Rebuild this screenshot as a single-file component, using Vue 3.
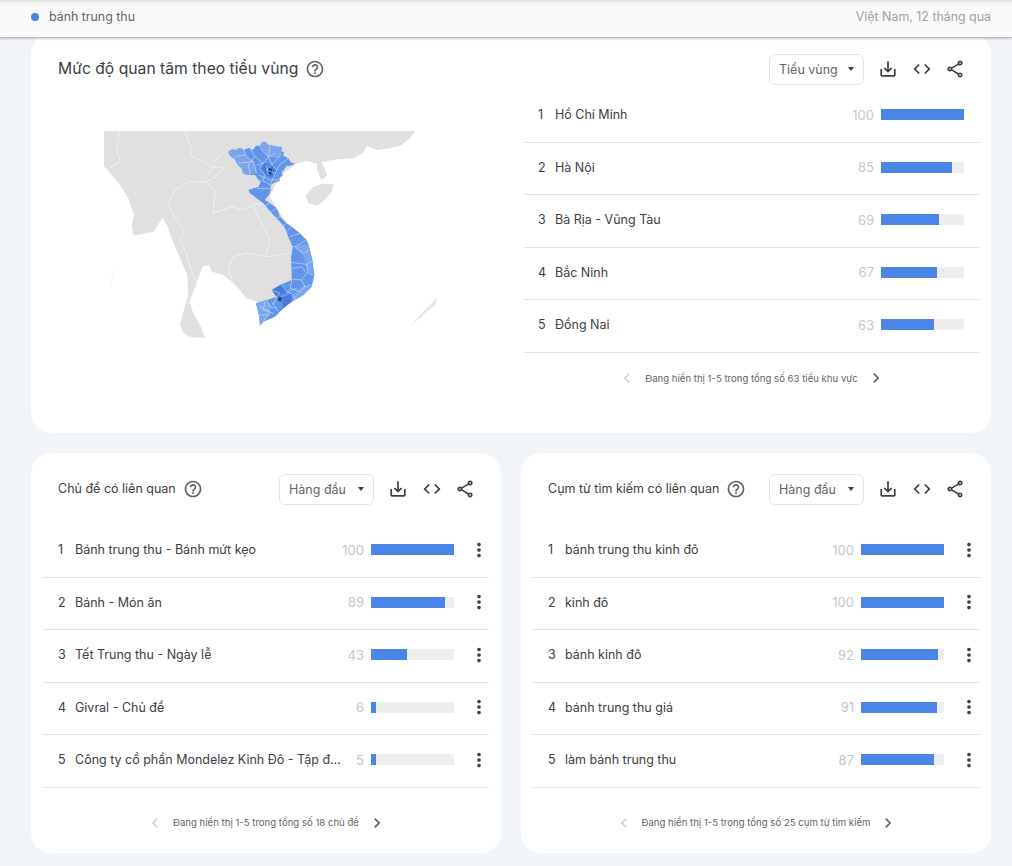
<script setup>
const icons = {
  save: 'M19 12v7H5v-7H3v7c0 1.1.9 2 2 2h14c1.1 0 2-.9 2-2v-7h-2zm-6 .67l2.59-2.58L17 11.5l-5 5-5-5 1.41-1.41L11 12.67V3h2z',
  code: 'M9.4 16.6L4.8 12l4.6-4.6L8 6l-6 6 6 6 1.4-1.4zm5.2 0l4.6-4.6-4.6-4.6L16 6l6 6-6 6-1.4-1.4z',
  share: 'M18 16.08c-.76 0-1.44.3-1.96.77L8.91 12.7c.05-.23.09-.46.09-.7s-.04-.47-.09-.7l7.05-4.11c.54.5 1.25.81 2.04.81 1.66 0 3-1.34 3-3s-1.34-3-3-3-3 1.34-3 3c0 .24.04.47.09.7L8.04 9.81C7.5 9.31 6.79 9 6 9c-1.66 0-3 1.34-3 3s1.34 3 3 3c.79 0 1.5-.31 2.04-.81l7.12 4.16c-.05.21-.08.43-.08.65 0 1.61 1.31 2.92 2.92 2.92 1.61 0 2.92-1.31 2.92-2.92s-1.31-2.92-2.92-2.92zM18 4c.55 0 1 .45 1 1s-.45 1-1 1-1-.45-1-1 .45-1 1-1zM6 13c-.55 0-1-.45-1-1s.45-1 1-1 1 .45 1 1-.45 1-1 1zm12 7.02c-.55 0-1-.45-1-1s.45-1 1-1 1 .45 1 1-.45 1-1 1z',
  help: 'M11 18h2v-2h-2v2zm1-16C6.48 2 2 6.48 2 12s4.48 10 10 10 10-4.48 10-10S17.52 2 12 2zm0 18c-4.41 0-8-3.59-8-8s3.59-8 8-8 8 3.59 8 8-3.59 8-8 8zm0-14c-2.21 0-4 1.79-4 4h2c0-1.1.9-2 2-2s2 .9 2 2c0 2-3 1.75-3 5h2c0-2.25 3-2.5 3-5 0-2.21-1.79-4-4-4z',
  prev: 'M15.41 7.41L14 6l-6 6 6 6 1.41-1.41L10.83 12z',
  next: 'M8.59 16.59L10 18l6-6-6-6-1.41 1.41L13.17 12z',
  more: 'M12 8c1.1 0 2-.9 2-2s-.9-2-2-2-2 .9-2 2 .9 2 2 2zm0 2c-1.1 0-2 .9-2 2s.9 2 2 2 2-.9 2-2-.9-2-2-2zm0 6c-1.1 0-2 .9-2 2s.9 2 2 2 2-.9 2-2-.9-2-2-2z'
}
const actions = ['save', 'code', 'share']
const barWidth = (v) => Math.min(83, Math.round(0.83 * v + 0.5)) + 'px'

const regions = [
  ['Hồ Chí Minh', 100], ['Hà Nội', 85], ['Bà Rịa - Vũng Tàu', 69], ['Bắc Ninh', 67], ['Đồng Nai', 63]
]
const cards = [
  {
    title: 'Chủ đề có liên quan',
    pager: 'Đang hiển thị 1-5 trong tổng số 18 chủ đề',
    rows: [
      ['Bánh trung thu - Bánh mứt kẹo', 100], ['Bánh - Món ăn', 89], ['Tết Trung thu - Ngày lễ', 43],
      ['Givral - Chủ đề', 6], ['Công ty cổ phần Mondelez Kinh Đô - Tập đoàn', 5]
    ]
  },
  {
    title: 'Cụm từ tìm kiếm có liên quan',
    pager: 'Đang hiển thị 1-5 trong tổng số 25 cụm từ tìm kiếm',
    rows: [
      ['bánh trung thu kinh đô', 100], ['kinh đô', 100], ['bánh kinh đô', 92],
      ['bánh trung thu giá', 91], ['làm bánh trung thu', 87]
    ]
  }
]

const land = 'M12 18H945L930 40 905 60 870 70 830 75 800 62 790 85 760 100 700 104 665 112 682 150 664 166 652 135 650 116 620 108 590 115 545 150 520 190 510 215 530 250 560 295 600 325 630 375 643 450 635 485 575 530 525 560 470 530 440 520 415 490 395 470 370 450 335 440 328 422 308 424 300 445 290 475 280 500 268 530 280 565 300 600 316 638 270 636 248 620 240 600 250 560 264 510 262 450 240 400 215 340 205 310 188 278 160 320 130 326 100 332 95 300 102 270 85 220 60 180 30 145 12 122Z'
const hainan = 'M616 212 640 186 670 176 702 178 695 200 675 225 650 242 625 235Z'
const vietnam = 'M385 80 397 72 405 76 420 68 432 75 447 68 458 75 468 62 480 62 486 52 497 50 505 60 520 62 530 68 546 67 544 80 552 80 550 92 565 100 572 112 586 117 570 122 558 124 552 136 545 140 548 152 538 158 540 168 525 172 512 180 512 195 508 208 495 225 510 235 530 250 540 275 560 295 575 305 600 325 620 345 630 375 637 405 643 450 635 485 610 510 575 530 545 555 525 575 490 590 480 602 478 575 468 535 500 525 530 515 515 495 545 478 575 465 575 440 573 400 578 365 565 335 555 310 540 290 515 265 490 235 450 205 445 195 475 185 482 172 472 160 465 150 448 150 430 146 425 130 412 118 405 102 390 92Z'
const light = [
  'M385 80 397 72 405 76 420 68 432 75 440 95 460 110 470 145 448 150 430 146 425 130 412 118 405 102 390 92Z',
  'M497 50 505 60 520 62 546 67 544 80 535 100 505 95 485 75 486 52Z',
  'M580 365 625 355 637 405 640 450 620 435 610 390Z',
  'M610 480 635 485 610 510 575 530 580 510Z',
  'M468 535 500 525 515 545 500 580 480 602 478 575Z'
]
const dark = [
  'M490 115 515 118 530 135 520 158 495 150 480 130Z',
  'M515 495 545 478 565 500 530 515Z',
  'M545 520 575 505 575 530 550 548Z'
]
const darkest = ['M505 128 516 132 514 150 505 146Z', 'M536 514 546 518 542 530 534 526Z']
const borders = [
  'M430 72 440 95 460 110 470 145', 'M450 70 465 95 490 115 480 130 495 150 490 165',
  'M480 60 485 75 505 95 490 115', 'M510 62 505 95 515 118 530 135 520 158 510 180',
  'M545 85 535 100 515 118', 'M565 100 540 118 530 135', 'M415 115 440 112 460 110', 'M405 95 435 90',
  'M465 95 445 120 450 148', 'M505 95 525 85', 'M490 115 470 120', 'M500 120 505 150', 'M515 118 500 135 525 145',
  'M475 150 510 165 540 165', 'M480 165 500 172 510 180', 'M470 190 510 190', 'M495 225 510 220',
  'M510 235 490 245', 'M530 250 510 262', 'M540 275 525 280', 'M560 295 545 305', 'M575 305 560 320',
  'M600 325 570 335', 'M620 345 585 365 578 365', 'M585 365 610 385 630 375', 'M573 412 620 418 635 410',
  'M620 418 625 445 640 450', 'M578 430 605 425 620 445 605 465 575 462', 'M605 465 615 485 635 480',
  'M575 465 570 490 600 500 615 485', 'M545 478 560 500 590 490', 'M515 495 540 505 530 515', 'M560 500 575 505 590 525',
  'M500 525 510 545 530 550', 'M480 545 510 560 490 590', 'M515 530 535 560', 'M478 570 510 570', 'M495 530 490 555 520 565', 'M530 515 520 540'
]
const borderLines = [
  'M60 18 50 70 60 110 30 128', 'M255 18 270 60 275 95 320 115 340 128 375 125 350 155 320 170 345 200 340 265 395 245 430 255 460 240 480 290 510 340 500 385',
  'M320 170 270 170 225 195 205 235 225 280 255 320 240 345 260 390 275 440 290 470', 'M345 120 320 150', 'M385 430 400 395 440 385 510 395 570 385', 'M385 430 395 470',
  'M460 240 490 235', 'M360 90 345 110'
]
</script>

<template>
  <div class="page">
    <header class="topbar">
      <span class="term"><i class="dot"></i>bánh trung thu</span>
      <span class="scope">Việt Nam, 12 tháng qua</span>
    </header>

    <section class="card wide">
      <div class="head">
        <h2 class="big">Mức độ quan tâm theo tiểu vùng</h2>
        <svg class="help" viewBox="0 0 24 24"><path :d="icons.help" /></svg>
        <div class="select">Tiểu vùng<i class="caret"></i></div>
        <div class="actions">
          <svg v-for="a in actions" :key="a" class="act" viewBox="0 0 24 24"><path :d="icons[a]" /></svg>
        </div>
      </div>
      <div class="split">
        <svg class="map" viewBox="0 0 1020 660">
          <path :d="land" fill="#e0e0e0" />
          <path :d="hainan" fill="#e0e0e0" />
          <path d="M45 420 38 455 30 490 36 455Z" fill="#e6e6e6" />
          <path d="M1012 515 1005 540 960 578 930 606 965 565Z" fill="#e6e6e6" />
          <path v-for="(d, i) in borderLines" :key="'b' + i" :d="d" class="land-line" />
          <path :d="vietnam" fill="#6095ea" />
          <path v-for="(d, i) in light" :key="'l' + i" :d="d" fill="#7ba5ed" />
          <path v-for="(d, i) in dark" :key="'d' + i" :d="d" fill="#477cdc" />
          <path v-for="(d, i) in darkest" :key="'k' + i" :d="d" fill="#123f9c" />
          <path v-for="(d, i) in borders" :key="'p' + i" :d="d" class="vn-line" />
        </svg>
        <div class="col">
          <div v-for="(r, i) in regions" :key="r[0]" class="row">
            <span class="rank">{{ i + 1 }}</span>
            <span class="label">{{ r[0] }}</span>
            <span class="val">{{ r[1] }}</span>
            <span class="track"><span class="fill" :style="{ width: barWidth(r[1]) }"></span></span>
          </div>
          <div class="pager top-pager">
            <svg class="chev off" viewBox="0 0 24 24"><path :d="icons.prev" /></svg>
            <span>Đang hiển thị 1-5 trong tổng số 63 tiểu khu vực</span>
            <svg class="chev" viewBox="0 0 24 24"><path :d="icons.next" /></svg>
          </div>
        </div>
      </div>
    </section>

    <div class="pair">
      <section v-for="c in cards" :key="c.title" class="card half">
        <div class="head">
          <h2 class="small">{{ c.title }}</h2>
          <svg class="help" viewBox="0 0 24 24"><path :d="icons.help" /></svg>
          <div class="select">Hàng đầu<i class="caret"></i></div>
          <div class="actions">
            <svg v-for="a in actions" :key="a" class="act" viewBox="0 0 24 24"><path :d="icons[a]" /></svg>
          </div>
        </div>
        <div class="list">
          <div v-for="(r, i) in c.rows" :key="r[0]" class="row">
            <span class="rank">{{ i + 1 }}</span>
            <span class="label">{{ r[0] }}</span>
            <span class="val">{{ r[1] }}</span>
            <span class="track"><span class="fill" :style="{ width: barWidth(r[1]) }"></span></span>
            <svg class="more" viewBox="0 0 24 24"><path :d="icons.more" /></svg>
          </div>
        </div>
        <div class="pager">
          <svg class="chev off" viewBox="0 0 24 24"><path :d="icons.prev" /></svg>
          <span>{{ c.pager }}</span>
          <svg class="chev" viewBox="0 0 24 24"><path :d="icons.next" /></svg>
        </div>
      </section>
    </div>
  </div>
</template>

<style>
html, body { background: #f1f4f9; }
</style>

<style scoped>
.page {
  width: 1012px;
  height: 866px;
  overflow: hidden;
  background: #f1f4f9;
  font-family: Inter, "Noto Sans", sans-serif;
  color: #3c4043;
}
.topbar {
  position: relative;
  z-index: 2;
  height: 38px;
  box-sizing: border-box;
  display: flex;
  align-items: center;
  justify-content: space-between;
  padding: 0 21px 4px 31px;
  background: linear-gradient(#dfdfdf 0, #f4f4f4 3px, #fafafa 6px);
  border-bottom: 1px solid #bdbdbd;
  box-shadow: 0 1px 2px rgba(0, 0, 0, .18);
  font-size: 12.4px;
}
.term { display: flex; align-items: center; color: #5f6368; }
.dot { width: 8px; height: 8px; border-radius: 50%; background: #4d84e2; margin-right: 10px; }
.scope { color: #9aa0a6; }
.card { background: #fff; border-radius: 20px; box-sizing: border-box; }
.wide { margin: -4px 21px 20px 31px; height: 399px; padding-top: 20px; }
.pair { display: flex; gap: 20px; margin: 0 21px 0 31px; }
.half { width: 470px; height: 400px; padding-top: 21px; }
.head { display: flex; align-items: center; height: 31px; padding: 0 24px 0 27px; }
h2 { margin: 0; font-weight: 400; color: #3c4043; }
.big { font-size: 15.7px; margin-top: -3px; }
.small { font-size: 12.5px; margin-top: -3px; }
.help { width: 20px; height: 20px; margin-left: 7px; fill: #5f6368; flex: none; margin-top: -1px; }
.select {
  margin-left: auto;
  width: 95px;
  height: 31px;
  box-sizing: border-box;
  display: flex;
  align-items: center;
  padding: 0 9px 1px;
  border: 1px solid #e3e3e3;
  border-radius: 6px;
  font-size: 12.5px;
  color: #5f6368;
}
.caret {
  margin-left: auto;
  width: 0;
  height: 0;
  border: 3.5px solid transparent;
  border-top: 4px solid #3c4043;
  border-bottom: 0;
}
.actions { display: flex; gap: 9.5px; margin: -2px 0 0 12px; }
.act { width: 24px; height: 24px; fill: #3c4043; transform: scale(.85); }
.split { display: flex; margin-top: 5px; padding-right: 12px; }
.map { width: 340px; height: 220px; margin: 35px 0 0 69px; flex: none; filter: blur(.5px); }
.land-line { fill: none; stroke: #f4f4f4; stroke-width: 2.5; }
.vn-line { fill: none; stroke: #d5e3fa; stroke-width: 1.8; }
.col { width: 455px; margin-left: auto; }
.list { margin: 20px 12px 0; }
.row {
  height: 52.5px;
  box-sizing: border-box;
  display: flex;
  align-items: center;
  border-bottom: 1px solid #e0e0e0;
  padding: 0 15px 2px 14px;
  font-size: 12.5px;
}
.list .row { padding: 0 0 2px 15px; }
.rank { width: 17px; flex: none; }
.label { flex: 0 1 auto; max-width: 267px; min-width: 0; white-space: nowrap; overflow: hidden; text-overflow: ellipsis; }
.val { margin-left: auto; margin-right: 7px; flex: none; text-align: right; color: #c4c7cb; font-size: 13px; }
.track { width: 83px; height: 11px; background: #eeeeee; flex: none; display: block; }
.fill { display: block; height: 100%; background: #4a86e8; }
.more { width: 22px; height: 22px; margin: 0 -1px 0 14px; fill: #3c4043; flex: none; }
.pager {
  display: flex;
  align-items: center;
  justify-content: center;
  gap: 8px;
  height: 70px;
  font-size: 9.6px;
  color: #5f6368;
}
.top-pager { height: 51px; }
.chev { width: 20px; height: 20px; fill: #5f6368; flex: none; }
.chev.off { fill: #d0d3d6; }
</style>
